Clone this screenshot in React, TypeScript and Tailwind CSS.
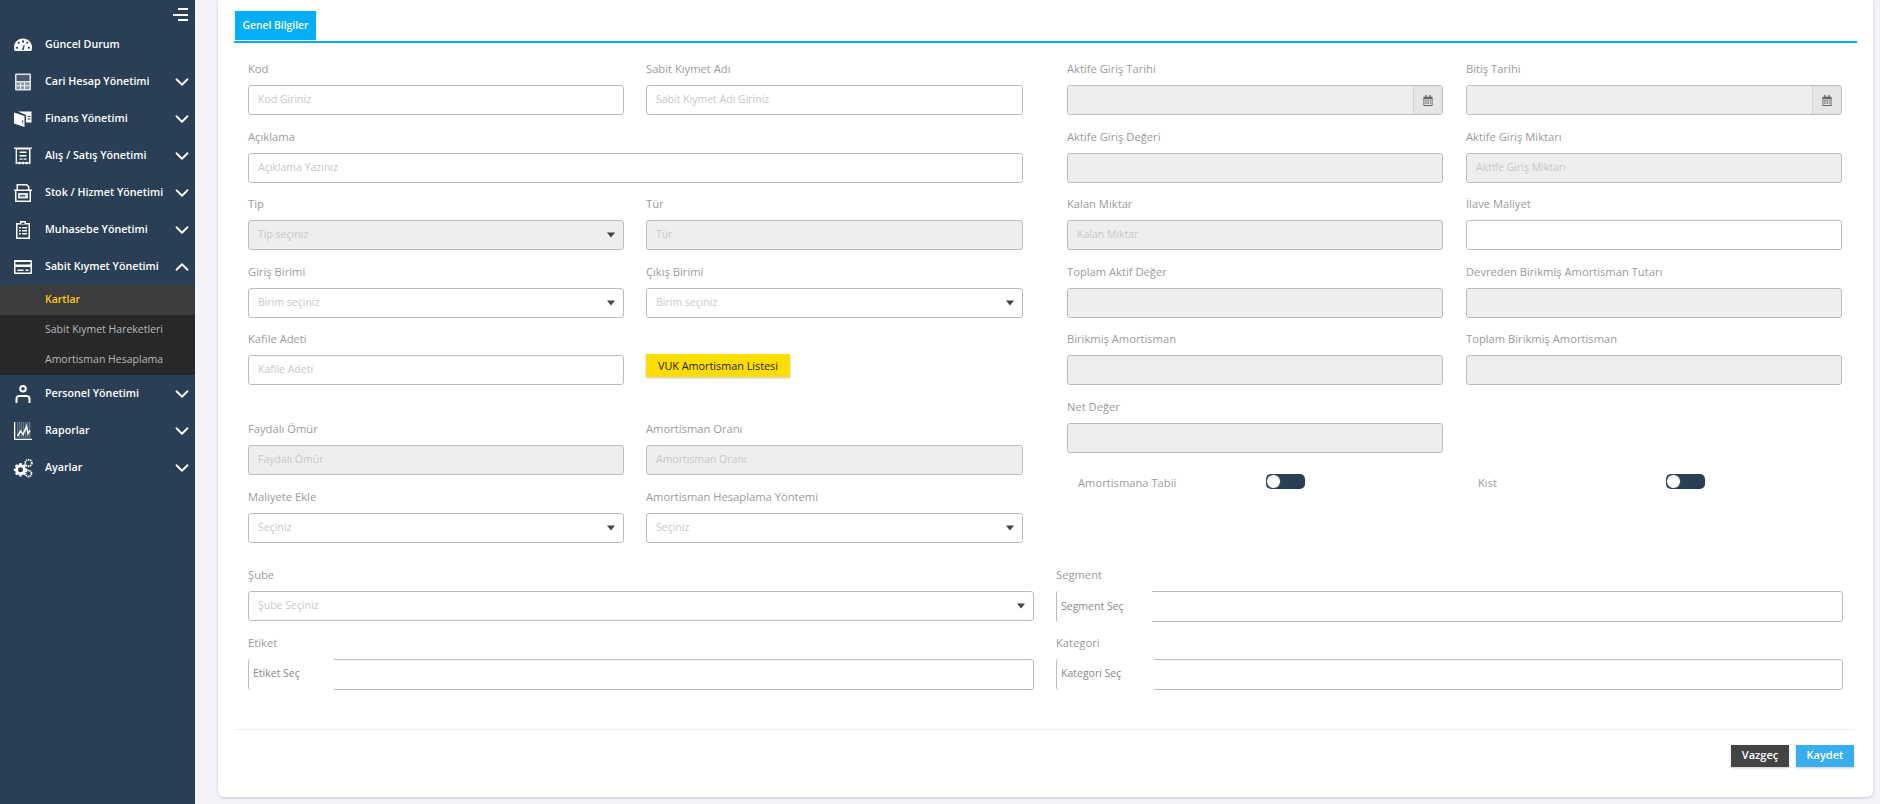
import React from "react";
import { ChevronDown, ChevronUp } from "lucide-react";

const Ic = ({ children }: { children: React.ReactNode }) => (
  <svg viewBox="0 0 20 20" className="w-[20px] h-[20px] shrink-0" fill="#fff">{children}</svg>
);

const icons: Record<string, React.ReactNode> = {
  gauge: <Ic><path fillRule="evenodd" d="M10 3.5C4.8 3.5 1 7.6 1 12.5c0 1.3.2 2.3.6 3.5h16.800c.4-1.200.6-2.200.6-3.500 0-4.900-3.800-9-9-9zM9 5.500h2v2H9zM4.500 7.500l1.500-1 1 1.500-1.500 1zM13 8l1-1.500 1.500 1-1 1.500zM2.800 12l2-.2.200 1.800-2 .2zM15 11.800l2 .2-.2 1.800-2-.2zM9 15l1.800-5.500.8.300L10.800 15z" /></Ic>,
  calc: <Ic><rect x="2" y="1.500" width="16" height="17" rx="1" fill="#dfe3e8" /><rect x="3.500" y="3" width="13" height="6" fill="#4a5a6c" /><rect x="3.500" y="10.500" width="13" height="6.500" fill="#8b98a6" /><path d="M7 10.500h1v6.500H7zM11 10.500h1v6.500h-1zM3.500 13.300h13v1h-13z" fill="#eef0f3" /></Ic>,
  wallet: <Ic><path d="M1 3.500l10.500 3.500v11L1 14.500zM5 2.500h13.500v11H13V6z" /><path d="M9 11.500h1.200v2H9z" fill="#2a3e55" /><path d="M14.500 7h3v1h-3zM14.500 9.500h3v1h-3z" fill="#2a3e55" /></Ic>,
  receipt: <Ic><path fillRule="evenodd" d="M1 1.500h18v1.200h-1.500v15.800l-1.860-1-1.860 1-1.860-1-1.860 1-1.860-1-1.860 1-1.860-1-1.860 1V2.700H1zM4 3.500V16l.8.400 1.700-.9 1.750.9 1.750-.9 1.750.9 1.750-.9 1.700.9.800-.4V3.500z" /><path d="M6.500 5.500h7v1.500h-7zM6.500 9h7v1.500h-7zM6.500 12.500h3v1.200h-3zM10.500 12.500h3v1.200h-3z" /></Ic>,
  box: <Ic><path fillRule="evenodd" d="M3.500 1h10.500l2.500 2.500V6.500H19V8h-1v11H2V8H1V6.500h2.500zM5 2.500v4h10V4.200L13.400 2.500zM3.500 8v9.500h13V8z" /><rect x="5" y="10" width="10" height="5.500" fill="#dfe3e8" /><rect x="7" y="12.200" width="5" height="1.200" fill="#2a3e55" /></Ic>,
  list: <Ic><path fillRule="evenodd" d="M7 1h6v2h4v16H3V3h4zM8.500 2.500V4h3V2.500zM4.500 4.500v13h11v-13zM6 7h1.800v1.500H6zm3 0h5v1.500H9zm-3 3h1.800v1.500H6zm3 0h5v1.500H9zm-3 3h1.800v1.500H6zm3 0h5v1.500H9z" /></Ic>,
  card: <Ic><path fillRule="evenodd" d="M2 3h16a1 1 0 0 1 1 1v12a1 1 0 0 1-1 1H2a1 1 0 0 1-1-1V4a1 1 0 0 1 1-1zm.500 2v2.500h15V5zm0 5v5.500h15V10zm2 2.500h6V14h-6zm8 0h3V14h-3z" /></Ic>,
  user: <Ic><path fillRule="evenodd" d="M10 1a3.800 3.800 0 1 1 0 7.600A3.800 3.800 0 0 1 10 1zm0 2a1.800 1.800 0 1 0 0 3.600A1.800 1.800 0 0 0 10 3zM2.500 19v-4a4 4 0 0 1 4-4h7a4 4 0 0 1 4 4v4h-2v-4a2 2 0 0 0-2-2h-7a2 2 0 0 0-2 2v4z" /></Ic>,
  chart: <Ic><path d="M1 1h1.300v16.700H19V19H1z" /><path d="M4 2h14M4 4h14M4 6h14M4 8h14M4 10h14M4 12h14M4 14h14M4 16h14M5 1.500V16.500M7 1.500V16.500M9 1.500V16.500M11 1.500V16.500M13 1.500V16.500M15 1.500V16.500M17 1.500V16.500" stroke="#aeb6bf" strokeWidth="0.7" strokeDasharray="1 1" fill="none" /><path d="M4.500 15l3-5 2.500 3.500 3.500-8 1.500 7 2-3" stroke="#fff" strokeWidth="1.500" fill="none" /></Ic>,
  gears: <Ic><path fillRule="evenodd" d="M6.500 5h2l.4 1.500 1.200.5 1.400-.8 1.500 1.500-.8 1.400.5 1.200 1.500.4v2l-1.500.4-.5 1.200.8 1.400-1.500 1.500-1.400-.8-1.200.5-.4 1.500h-2l-.4-1.500-1.200-.5-1.400.8L2 15.800l.8-1.400-.5-1.200L.8 12.800v-2l1.500-.4.5-1.200L2 7.800l1.500-1.500 1.400.8 1.200-.5zM7.500 9.300a2.500 2.500 0 1 0 0 5 2.500 2.500 0 0 0 0-5z" /><circle cx="15.500" cy="5" r="3.300" fill="none" stroke="#fff" strokeWidth="1.800" strokeDasharray="1.400 0.700" /><circle cx="15.500" cy="15.500" r="3" fill="none" stroke="#fff" strokeWidth="1.800" strokeDasharray="1.400 0.700" /></Ic>,
};

const Item = ({ icon, label, open, chevron = true }: { icon: string; label: string; open?: boolean; chevron?: boolean }) => (
  <div className="h-[37px] flex items-center pl-[13px] pr-[2px]">
    {icons[icon]}
    <span className="ml-[12px] flex-1 text-[10.7px] font-semibold text-white whitespace-nowrap">{label}</span>
    {chevron && (open ? <ChevronUp className="w-[22px] h-[22px] text-white" strokeWidth={2} /> : <ChevronDown className="w-[22px] h-[22px] text-white" strokeWidth={2} />)}
  </div>
);

const Sidebar = () => (
  <aside className="w-[195px] shrink-0 bg-[#2a3e55]">
    <div className="h-[26px] flex justify-end pr-[7px] pt-[8px]">
      <div className="flex flex-col items-end gap-[3.500px]">
        <div className="w-[10px] h-[2px] bg-white" />
        <div className="w-[15px] h-[2px] bg-white" />
        <div className="w-[10px] h-[2px] bg-white" />
      </div>
    </div>
    <Item icon="gauge" label="Güncel Durum" chevron={false} />
    <Item icon="calc" label="Cari Hesap Yönetimi" />
    <Item icon="wallet" label="Finans Yönetimi" />
    <Item icon="receipt" label="Alış / Satış Yönetimi" />
    <Item icon="box" label="Stok / Hizmet Yönetimi" />
    <Item icon="list" label="Muhasebe Yönetimi" />
    <Item icon="card" label="Sabit Kıymet Yönetimi" open />
    <div className="bg-[#282828] text-[10.500px]">
      <div className="h-[30px] flex items-center pl-[45px] bg-[#3c3c3e] text-[#ffc90e] font-semibold">Kartlar</div>
      <div className="h-[30px] flex items-center pl-[45px] text-[#b4b9bf]">Sabit Kıymet Hareketleri</div>
      <div className="h-[30px] flex items-center pl-[45px] text-[#b4b9bf]">Amortisman Hesaplama</div>
    </div>
    <Item icon="user" label="Personel Yönetimi" />
    <Item icon="chart" label="Raporlar" />
    <Item icon="gears" label="Ayarlar" />
  </aside>
);

const Caret = () => <span className="absolute right-[8px] top-1/2 -translate-y-1/2 w-0 h-0 border-x-[4px] border-x-transparent border-t-[5px] border-t-[#444]" />;

const Box = ({ ph, dis, select, date, h = "h-[30px]" }: { ph?: string; dis?: boolean; select?: boolean; date?: boolean; h?: string }) => (
  <div className={`relative ${h} rounded-[3px] border border-[#bdbdbd] flex items-center pl-[9px] text-[10.500px] text-[#c8c8c8] whitespace-nowrap overflow-hidden ${dis ? "bg-[#eeeeee]" : "bg-white"}`}>
    {ph}
    {select && <Caret />}
    {date && (
      <span className="absolute right-0 inset-y-0 w-[29px] border-l border-[#d4d4d4] bg-[#e6e6e6] flex items-center justify-center">
        <svg viewBox="0 0 10 12" className="w-[10px] h-[11px]" fill="#666"><path fillRule="evenodd" d="M2 0h1.500v2h3V0H8v2h2v10H0V2h2zM1 4.500v6.500h8V4.500zm1 1h1.500V7H2zm2.500 0H6V7H4.500zm2.500 0h1V7H7zM2 8h1.500v1.500H2zm2.500 0H6v1.500H4.500zM7 8h1v1.500H7z" /></svg>
      </span>
    )}
  </div>
);

const Label = ({ children }: { children: React.ReactNode }) => (
  <div className="h-[25.500px] pt-[0.500px] text-[11.200px] leading-[18px] text-[#9b9b9b] whitespace-nowrap">{children}</div>
);

const Field = ({ label, className = "", ...p }: { label: string; className?: string; ph?: string; dis?: boolean; select?: boolean; date?: boolean; h?: string }) => (
  <div className={`h-[67.500px] ${className}`}>
    <Label>{label}</Label>
    <Box {...p} />
  </div>
);

const Tokens = ({ label, ph, w }: { label: string; ph: string; w: string }) => (
  <div className="h-[67.500px]">
    <Label>{label}</Label>
    <div className="relative h-[31px] rounded-[3px] border border-[#bdbdbd] bg-white">
      <div className={`absolute -left-px -top-px -bottom-px ${w} bg-white border-l border-[#bdbdbd] rounded-l-[3px] flex items-center pl-[4px] text-[10.500px] text-[#8a8a8a]`}>{ph}</div>
    </div>
  </div>
);

const Toggle = () => (
  <div className="relative w-[39px] h-[15px] rounded-[5px] bg-[#2a3e55]">
    <div className="absolute left-0 top-0 w-[15px] h-[15px] rounded-full bg-white border border-[#2a3e55]" />
  </div>
);

const App = () => (
  <div className="flex h-[804px] overflow-hidden bg-[#f3f4f9] font-['Open_Sans',sans-serif]">
    <Sidebar />
    <main className="flex-1 pl-[23px] pr-[7px] pb-[7px]">
      <div className="h-full bg-white rounded-b-[6px] shadow-[0_1px_3px_rgba(0,0,0,0.18)] px-[16px] pt-[11px]">
        <div className="border-b-2 border-[#03aef8] pb-[1px] pl-[1px] mb-[16.600px]">
          <div className="w-[81px] h-[29px] bg-[#03aef8] text-white text-[10.300px] font-semibold flex items-center justify-center whitespace-nowrap">Genel Bilgiler</div>
        </div>
        <div className="pl-[14px] pr-[15px] flex gap-[44px]">
          <div className="w-[775px] shrink-0 grid grid-cols-[376px_377px] gap-x-[22px] content-start">
            <Field label="Kod" ph="Kod Giriniz" />
            <Field label="Sabit Kıymet Adı" ph="Sabit Kıymet Adı Giriniz" />
            <Field label="Açıklama" ph="Açıklama Yazınız" className="col-span-2" />
            <Field label="Tip" ph="Tip seçiniz" dis select />
            <Field label="Tür" ph="Tür" dis />
            <Field label="Giriş Birimi" ph="Birim seçiniz" select />
            <Field label="Çıkış Birimi" ph="Birim seçiniz" select />
            <Field label="Kafile Adeti" ph="Kafile Adeti" />
            <div className="pt-[24.500px]">
              <button className="block w-[144px] h-[23px] bg-[#ffdd00] text-[10.800px] font-medium text-[#222] shadow-[0_1px_2px_rgba(0,0,0,0.25)] whitespace-nowrap">VUK Amortisman Listesi</button>
            </div>
            <div className="col-span-2 h-[22.500px]" />
            <Field label="Faydalı Ömür" ph="Faydalı Ömür" dis />
            <Field label="Amortisman Oranı" ph="Amortisman Oranı" dis />
            <Field label="Maliyete Ekle" ph="Seçiniz" select />
            <Field label="Amortisman Hesaplama Yöntemi" ph="Seçiniz" select />
          </div>
          <div className="w-[775px] shrink-0 grid grid-cols-[376px_376px] gap-x-[23px] content-start">
            <Field label="Aktife Giriş Tarihi" dis date />
            <Field label="Bitiş Tarihi" dis date />
            <Field label="Aktife Giriş Değeri" dis />
            <Field label="Aktife Giriş Miktarı" ph="Aktife Giriş Miktarı" dis />
            <Field label="Kalan Miktar" ph="Kalan Miktar" dis />
            <Field label="İlave Maliyet" />
            <Field label="Toplam Aktif Değer" dis />
            <Field label="Devreden Birikmiş Amortisman Tutarı" dis />
            <Field label="Birikmiş Amortisman" dis />
            <Field label="Toplam Birikmiş Amortisman" dis />
            <Field label="Net Değer" dis />
            <div />
            <div className="col-span-2 flex pt-[9px] text-[11.200px] text-[#9b9b9b]">
              <div className="w-[399px] flex items-center pl-[11px]"><span className="w-[188px] translate-y-[1px]">Amortismana Tabii</span><Toggle /></div>
              <div className="flex items-center pl-[12px]"><span className="w-[188px] translate-y-[1px]">Kıst</span><Toggle /></div>
            </div>
          </div>
        </div>
        <div className="pl-[14px] pt-[11px] grid grid-cols-[786px_787px] gap-x-[22px]">
          <Field label="Şube" ph="Şube Seçiniz" select />
          <Tokens label="Segment" ph="Segment Seç" w="w-[96px]" />
          <Tokens label="Etiket" ph="Etiket Seç" w="w-[86px]" />
          <Tokens label="Kategori" ph="Kategori Seç" w="w-[98px]" />
        </div>
        <div className="mt-[28px] mx-[2px] border-t border-[#eeeee6]" />
        <div className="flex justify-end gap-[7px] mt-[15px] pr-[3px]">
          <button className="w-[58px] h-[22px] bg-[#444444] text-white text-[11px] font-semibold shadow-[0_1px_2px_rgba(0,0,0,0.2)]">Vazgeç</button>
          <button className="w-[58px] h-[22px] bg-[#38aeee] text-white text-[11px] font-semibold shadow-[0_1px_2px_rgba(0,0,0,0.2)]">Kaydet</button>
        </div>
      </div>
    </main>
  </div>
);

export default App;
